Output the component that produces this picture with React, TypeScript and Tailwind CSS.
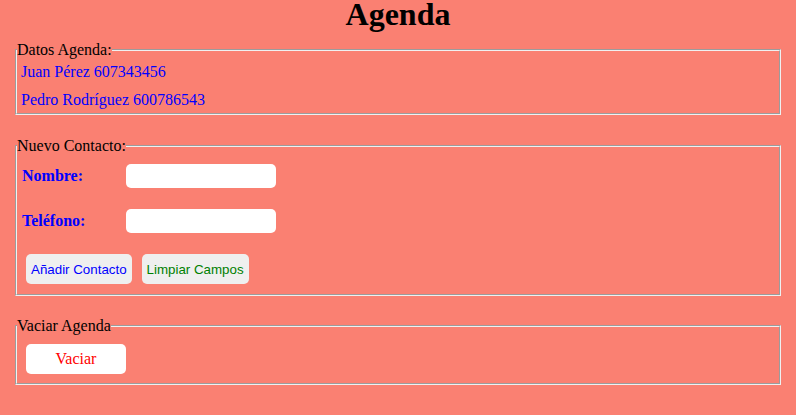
import React from "react";

const contacts = [
  { name: "Juan Pérez", phone: "607343456" },
  { name: "Pedro Rodríguez", phone: "600786543" },
];

const boxCls =
  "mx-[15px] border-2 [border-style:groove] border-[#f0f0f0] min-w-0";

export default function App() {
  return (
    <div className="min-h-screen bg-[#fa8072] text-black font-['Liberation_Serif',serif] text-[16px] leading-[normal]">
      <h1 className="text-center text-[32px] font-bold leading-[28px]">Agenda</h1>

      <fieldset className={`${boxCls} mt-[13px]`}>
        <legend>Datos Agenda:</legend>
        <div className="flex flex-col gap-[2px] pl-[4px]">
          {contacts.map((c) => (
            <div key={c.phone} className="leading-[26px] text-[#0000ff]">
              {c.name} {c.phone}
            </div>
          ))}
        </div>
      </fieldset>

      <fieldset className={`${boxCls} mt-[22px] pb-[10px]`}>
        <legend>Nuevo Contacto:</legend>
        <div className="flex items-center pl-[5px] mt-[9px]">
          <label className="w-[104px] font-bold text-[#0000ff]">Nombre:</label>
          <input type="text" className="w-[150px] h-[24px] bg-white rounded-[5px] outline-none" />
        </div>
        <div className="flex items-center pl-[5px] mt-[21px]">
          <label className="w-[104px] font-bold text-[#0000ff]">Teléfono:</label>
          <input type="text" className="w-[150px] h-[24px] bg-white rounded-[5px] outline-none" />
        </div>
        <div className="flex gap-[10px] pl-[9px] mt-[21px] font-['Liberation_Sans',Arial,sans-serif] text-[13.33px]">
          <button className="h-[30px] px-[5px] bg-[#efefef] rounded-[5px] text-[#0000ff]">Añadir Contacto</button>
          <button className="h-[30px] px-[5px] bg-[#efefef] rounded-[5px] text-[#008000]">Limpiar Campos</button>
        </div>
      </fieldset>

      <fieldset className={`${boxCls} mt-[21px] pb-[9px]`}>
        <legend>Vaciar Agenda</legend>
        <div className="pl-[9px] mt-[9px]">
          <button className="w-[100px] h-[30px] bg-white rounded-[5px] text-[#ff0000]">Vaciar</button>
        </div>
      </fieldset>
    </div>
  );
}
